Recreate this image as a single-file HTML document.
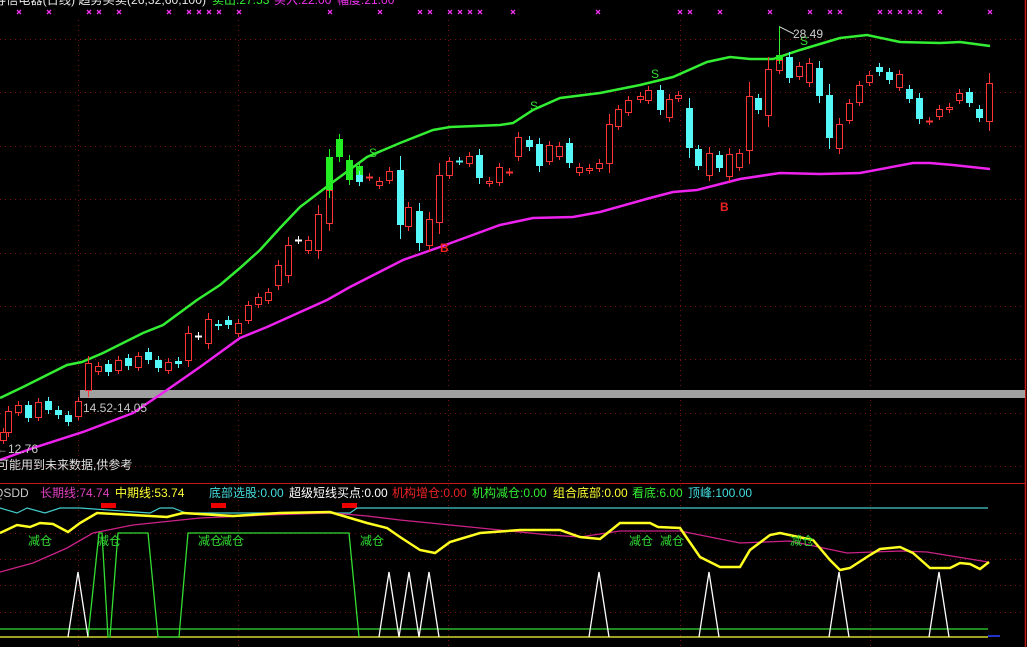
<!DOCTYPE html>
<html><head><meta charset="utf-8">
<style>
html,body{margin:0;padding:0;background:#000;width:1027px;height:647px;overflow:hidden}
svg{display:block}
text{font-family:"Liberation Sans","Noto Sans CJK SC",sans-serif;font-size:12px}
</style></head><body>
<svg id="s" width="1027" height="647" viewBox="0 0 1027 647" xmlns="http://www.w3.org/2000/svg">
<rect width="1027" height="647" fill="#000"/>
<g stroke="#7a1010" stroke-dasharray="1,4" stroke-width="1">
<line x1="0" y1="39.5" x2="1025" y2="39.5"/><line x1="0" y1="92.5" x2="1025" y2="92.5"/>
<line x1="0" y1="146.5" x2="1025" y2="146.5"/><line x1="0" y1="199.5" x2="1025" y2="199.5"/>
<line x1="0" y1="253.5" x2="1025" y2="253.5"/><line x1="0" y1="306.5" x2="1025" y2="306.5"/>
<line x1="0" y1="359.5" x2="1025" y2="359.5"/><line x1="0" y1="413.5" x2="1025" y2="413.5"/>
<line x1="0" y1="466.5" x2="1025" y2="466.5"/>
<line x1="0" y1="533.5" x2="1025" y2="533.5"/><line x1="0" y1="559.5" x2="1025" y2="559.5"/>
<line x1="0" y1="585.5" x2="1025" y2="585.5"/><line x1="0" y1="612.5" x2="1025" y2="612.5"/>
<line x1="78.5" y1="20" x2="78.5" y2="647"/><line x1="238.5" y1="20" x2="238.5" y2="647"/>
<line x1="448.5" y1="20" x2="448.5" y2="647"/><line x1="680.5" y1="20" x2="680.5" y2="647"/>
<line x1="870.5" y1="20" x2="870.5" y2="647"/>
</g>
<line x1="0" y1="483.5" x2="1025" y2="483.5" stroke="#c01818" stroke-width="1"/>
<line x1="1025.5" y1="0" x2="1025.5" y2="647" stroke="#c01818" stroke-width="1.5"/>
<rect x="80" y="390" width="945" height="8" fill="#a0a0a0"/>
<polyline fill="none" stroke="#33ee33" stroke-width="2.5" points="0,398 23,387 67,365 82,362 103,353 143,333 163,325 197,300 220,285 240,268 260,250 280,228 300,207 333,182 367,157 400,143 433,130 450,127 500,125 513,123 533,110 560,98 600,93 640,85 673,77 707,62 730,57 750,59 773,59 800,50 840,38 867,35 900,42 940,43 960,42 990,46"/>
<polyline fill="none" stroke="#ee22ee" stroke-width="2.5" points="0,460 33,448 83,432 133,413 167,390 200,367 240,338 267,327 327,300 350,287 403,260 440,247 500,225 533,218 573,217 600,212 650,198 673,192 697,190 740,179 780,173 820,174 860,173 913,163 930,163 953,165 990,169"/>
<g id="c"></g>
<g id="xm" stroke="#ee33ee" stroke-width="1.3"></g>
<text x="-6" y="4" fill="#e8e8e8" textLength="212" lengthAdjust="spacingAndGlyphs">等信电器(日线) 趋势买卖(26,32,60,100)</text>
<text x="212" y="4" fill="#33ee33">卖出:27.53</text>
<text x="274" y="4" fill="#ee33ee">买入:22.00</text>
<text x="337" y="4" fill="#ee33ee">幅度:21.00</text>
<g fill="#33dd33" font-size="11"><text x="369" y="157">S</text><text x="530" y="110">S</text><text x="651" y="78">S</text><text x="800" y="45">S</text></g>
<g fill="#ee2222" font-size="11" font-weight="bold"><text x="440" y="252">B</text><text x="720" y="211">B</text></g>
<line x1="779.5" y1="26" x2="779.5" y2="58" stroke="#33ee33"/>
<path d="M780 27 l4 2 l10 5" stroke="#ccc" fill="none"/>
<text x="793" y="38" fill="#d0d0d0">28.49</text>
<text x="83" y="412" fill="#c8c8c8">14.52-14.05</text>
<text x="-4" y="453" fill="#c8c8c8">←12.76</text>
<text x="-3" y="469" fill="#e0e0e0">可能用到未来数据,供参考</text>
<g font-size="12">
<text x="-6" y="497" fill="#c8c8c8">QSDD</text>
<text x="40" y="497" fill="#e040c0">长期线:74.74</text>
<text x="115" y="497" fill="#ffff33">中期线:53.74</text>
<text x="209" y="497" fill="#44dddd">底部选股:0.00</text>
<text x="289" y="497" fill="#ffffff">超级短线买点:0.00</text>
<text x="392" y="497" fill="#ee2222">机构增仓:0.00</text>
<text x="472" y="497" fill="#33ee33">机构减仓:0.00</text>
<text x="553" y="497" fill="#ffff33">组合底部:0.00</text>
<text x="632" y="497" fill="#33ee33">看底:6.00</text>
<text x="688" y="497" fill="#44dddd">顶峰:100.00</text>
</g>
<g fill="#ee0000"><rect x="101" y="503" width="15" height="5"/><rect x="211" y="503" width="15" height="5"/><rect x="342" y="503" width="15" height="5"/></g>
<polyline fill="none" stroke="#44cccc" stroke-width="1.2" points="0,508 17,513 27,508 45,513 60,508 80,508 150,513 160,508 173,508 186,513 350,513 357,508 988,508"/>
<polyline fill="none" stroke="#33dd33" stroke-width="1.3" points="0,629 988,629"/>
<polyline fill="none" stroke="#ffff33" stroke-width="1.3" points="0,637 988,637"/>
<polyline fill="none" stroke="#33dd33" stroke-width="1.3" points="88,637 99,533 102,533 108,637 110,637 118,533 148,533 158,637 179,637 188,533 349,533 359,637"/>
<g fill="none" stroke="#ffffff" stroke-width="1.3" id="tri"></g>
<polyline fill="none" stroke="#cc2288" stroke-width="1.3" points="0,572 33,563 67,548 93,533 133,525 200,518 267,515 333,513 367,516 400,520 450,525 500,530 550,535 580,537 620,531 680,531 740,543 790,541 847,553 900,551 927,552 988,562"/>
<polyline fill="none" stroke="#ffff22" stroke-width="2.5" points="0,533 17,525 30,527 40,523 53,524 68,532 80,523 97,513 133,515 167,517 183,513 233,516 280,513 330,512 340,515 367,523 387,528 400,537 420,550 435,553 450,542 480,533 520,530 560,530 580,537 600,539 620,523 650,523 658,527 680,528 700,557 720,567 740,567 750,550 770,535 780,533 813,540 830,560 840,570 850,568 870,555 880,549 900,547 913,553 930,568 950,568 960,563 970,564 980,569 989,562"/>
<g fill="#33dd33" font-size="12">
<text x="28" y="545">减仓</text><text x="97" y="545">减仓</text><text x="198" y="545">减仓</text><text x="220" y="545">减仓</text><text x="360" y="545">减仓</text><text x="629" y="545">减仓</text><text x="660" y="545">减仓</text><text x="790" y="545">减仓</text>
</g>
<rect x="988" y="635" width="12" height="2" fill="#2233cc"/>
</svg>
<script>
var ns="http://www.w3.org/2000/svg",g=document.getElementById('c');
function el(t,a,p){var e=document.createElementNS(ns,t);for(var k in a)e.setAttribute(k,a[k]);(p||g).appendChild(e);return e;}
var R="#ff3535",C="#55f8f8",G="#22ee22",W="#ffffff";
var d=[[3,432,440,'r'],[8,411,432,'r'],[18,405,412,'r'],[28,405,418,'c'],[38,402,417,'r'],[48,401,410,'c'],[58,410,415,'c'],[68,415,422,'c'],[78,401,416,'r'],
[88,363,390,'r'],[98,366,371,'r'],[108,364,372,'c'],[118,360,370,'r'],[128,358,366,'c'],[138,356,367,'r'],[148,352,360,'c'],[158,360,368,'c'],[168,362,370,'r'],[178,361,364,'c'],[188,333,360,'r'],[198,336,336,'w'],[208,319,343,'r'],[218,324,326,'c'],[228,320,325,'c'],[238,323,333,'r'],[248,305,320,'r'],[258,297,304,'r'],[268,292,300,'r'],[278,265,285,'r'],[288,245,275,'r'],[298,240,240,'w'],[308,240,250,'r'],[318,214,250,'r'],[329,190,223,'r'],[329,157,190,'g'],[339,139,157,'g'],[349,160,180,'g'],[359,166,176,'g'],[359,175,182,'c'],[369,177,177,'x'],[379,181,185,'r'],[389,171,180,'r'],[400,170,225,'c'],[408,207,226,'r'],[419,211,243,'c'],[429,219,245,'r'],[439,175,222,'r'],[449,161,175,'r'],[459,161,161,'wc'],[469,156,163,'r'],[479,155,178,'c'],[489,181,183,'r'],[499,167,182,'r'],[509,172,172,'x'],[518,137,156,'r'],[529,140,147,'c'],[539,144,166,'c'],[549,145,161,'r'],[559,146,156,'r'],[569,143,163,'c'],[579,167,172,'r'],[589,168,170,'r'],[599,163,168,'r'],[609,124,163,'r'],[618,109,126,'r'],[628,100,112,'r'],[640,96,99,'r'],[648,90,100,'r'],[660,90,110,'c'],[669,99,117,'r'],[678,95,98,'r'],[689,108,148,'c'],[698,149,166,'c'],[709,153,175,'r'],[719,155,168,'c'],[729,154,176,'r'],[739,153,167,'r'],[749,96,150,'r'],[758,98,110,'c'],[768,69,115,'r'],[779,60,70,'r'],[779,55,60,'g'],[789,57,78,'c'],[799,66,76,'r'],[809,63,82,'r'],[819,68,96,'c'],[829,95,138,'c'],[839,124,148,'r'],[849,103,120,'r'],[859,85,102,'r'],[869,75,82,'r'],[879,67,72,'c'],[889,72,80,'c'],[899,74,87,'r'],[909,89,99,'c'],[919,98,119,'c'],[929,121,121,'x'],[939,109,116,'r'],[949,107,109,'r'],[959,93,100,'r'],[969,92,103,'c'],[979,109,118,'c'],[989,83,121,'r']];
d.forEach(function(c){var x=c[0],t=c[1],b=c[2],k=c[3],col=k=='r'||k=='x'?R:k=='c'||k=='wc'?C:k=='g'?G:W;
var h=Math.max(4,Math.round((b-t)*0.25));
el('line',{x1:x+.5,y1:t-h,x2:x+.5,y2:b+h,stroke:col,'stroke-width':1});
if(k=='r')el('rect',{x:x-3+.5,y:t+.5,width:6,height:Math.max(1,b-t),fill:'#000',stroke:col,'stroke-width':1});
else if(k=='c'||k=='g')el('rect',{x:x-3,y:t,width:7,height:Math.max(2,b-t),fill:col});
else el('line',{x1:x-3,y1:t+.5,x2:x+4,y2:t+.5,stroke:col,'stroke-width':2});});
var xm=document.getElementById('xm');
[19,49,89,99,119,169,189,199,209,219,239,330,380,420,430,450,460,470,480,513,598,680,690,720,770,810,830,840,880,890,900,910,920,940,990].forEach(function(x){
el('path',{d:'M'+(x-2)+' 10 l4 4 M'+(x+2)+' 10 l-4 4'},xm);});
var tri=document.getElementById('tri');
[78,389,409,429,599,709,839,939].forEach(function(x){el('polyline',{points:(x-10)+',637 '+x+',572 '+(x+10)+',637'},tri);});
</script>
</body></html>
